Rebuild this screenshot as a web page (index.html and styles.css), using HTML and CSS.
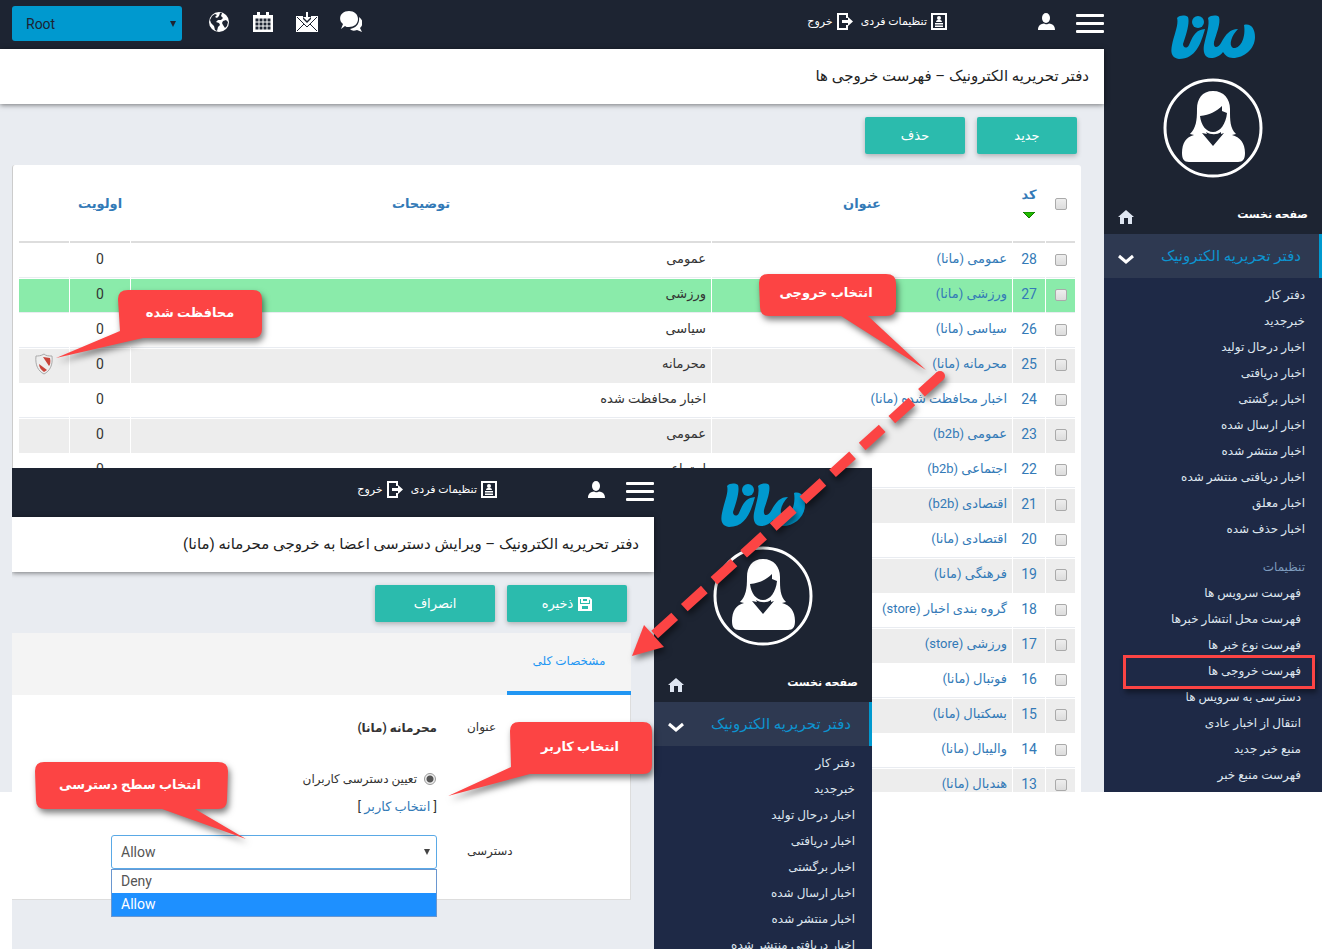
FILE: index.html
```html
<!DOCTYPE html>
<html lang="fa" dir="rtl">
<head>
    <meta charset="UTF-8">
    <meta name="viewport" content="width=device-width, initial-scale=1.0">
    <title>دفتر تحریریه الکترونیک - فهرست خروجی ها</title>
    <link rel="stylesheet" href="styles.css">
</head>
<body>

    <!-- Shared icons -->
    <svg class="sprite" aria-hidden="true">
        <symbol id="logo" viewBox="0 0 84 45">
            <path d="M6 3C9 0 14 0 17 2C19 8 15 20 12 29C12 33 16 34 18 30C23 18 26 15 34 14C30 28 25 44 8 44C-1 43 0 35 1 30C3 20 8 9 6 3z"/>
            <circle cx="27" cy="7" r="6"/>
            <path d="M37 3C40 0 46 0 48 2C50 8 45 20 43 27C42 34 47 33 50 28C55 19 59 14 67 14C61 20 57 30 62 33C70 34 75 22 73 10C80 8 84 14 84 22C84 34 73 43 62 43C57 43 54 40 52 37C49 41 44 43 40 43C33 43 32 36 33 30C35 20 39 10 37 3z"/>
        </symbol>
        <symbol id="avatar" viewBox="0 0 100 100">
            <circle cx="50" cy="50" r="48" fill="none" stroke="#fff" stroke-width="3"/>
            <path fill="#fff" d="M50 13C39 13 34 21 34 31C34 43 33 50 27 56L31 57C23 59 19 65 19 75C19 81 21 84 26 84L75 84C80 84 82 81 82 75C82 65 77 59 69 57L73 56C67 50 67 43 67 31C67 21 61 13 50 13z"/>
            <path fill="#1d2432" d="M37 38C47 37 54 33 59 28L59 33L64 35C63 46 57 54 50 54C43 54 38 47 37 38zM39 55L44 56L43 54C48 57 54 57 58 54L58 56L61 55L50 68z"/>
        </symbol>
        <symbol id="home" viewBox="0 0 16 14">
            <path d="M8 0L0 7L2 7L2 14L6 14L6 8L10 8L10 14L14 14L14 7L16 7z"/>
        </symbol>
        <symbol id="chevron" viewBox="0 0 16 10">
            <path d="M1 2L8 8L15 2" fill="none" stroke="#fff" stroke-width="3"/>
        </symbol>
        <symbol id="user" viewBox="0 0 17 17">
            <ellipse cx="8" cy="5" rx="4" ry="5"/>
            <path d="M0 17C0 12 3 11 6 10.500C7 11.500 10 11.500 11 10.500C14 11 17 12 17 17z"/>
        </symbol>
        <symbol id="profile" viewBox="0 0 16 17">
            <rect x="1" y="1" width="14" height="15" fill="none" stroke="#fff" stroke-width="2"/>
            <circle cx="8" cy="5" r="2"/>
            <path d="M5 9C5 6 11 6 11 9zM4 10H12V11.500H4zM4 12.500H12V14H4z"/>
        </symbol>
        <symbol id="logout" viewBox="0 0 16 17">
            <path d="M10 5V1H1V16H10V12" fill="none" stroke="#fff" stroke-width="2"/>
            <path d="M5 7H11V4L16 8.500L11 13V10H5z"/>
        </symbol>
    </svg>

    <!-- Output list window -->
    <div class="window list-window">
        <aside class="sidebar">
            <svg class="logo"><use href="#logo"/></svg>
            <svg class="avatar"><use href="#avatar"/></svg>
            <a class="home-link" href="#">صفحه نخست <svg><use href="#home"/></svg></a>
            <a class="section-link" href="#">دفتر تحریریه الکترونیک <svg><use href="#chevron"/></svg></a>
            <ul class="submenu">
                <li><a href="#">دفتر کار</a></li>
                <li><a href="#">خبرجدید</a></li>
                <li><a href="#">اخبار درحال تولید</a></li>
                <li><a href="#">اخبار دریافتی</a></li>
                <li><a href="#">اخبار برگشتی</a></li>
                <li><a href="#">اخبار ارسال شده</a></li>
                <li><a href="#">اخبار منتشر شده</a></li>
                <li><a href="#">اخبار دریافتی منتشر شده</a></li>
                <li><a href="#">اخبار معلق</a></li>
                <li><a href="#">اخبار حذف شده</a></li>
                <li class="submenu-title">تنظیمات</li>
                <li class="nested"><a href="#">فهرست سرویس ها</a></li>
                <li class="nested"><a href="#">فهرست محل انتشار خبرها</a></li>
                <li class="nested"><a href="#">فهرست نوع خبر ها</a></li>
                <li class="nested marked"><a href="#">فهرست خروجی ها</a></li>
                <li class="nested"><a href="#">دسترسی به سرویس ها</a></li>
                <li class="nested"><a href="#">انتقال از اخبار عادی</a></li>
                <li class="nested"><a href="#">منبع خبر جدید</a></li>
                <li class="nested"><a href="#">فهرست منبع خبر</a></li>
            </ul>
        </aside>

        <main class="main">
            <header class="topbar">
                <button class="menu-button" aria-label="منو"><span></span><span></span><span></span></button>
                <svg class="user-icon"><use href="#user"/></svg>
                <nav class="account">
                    <a href="#"><svg><use href="#profile"/></svg>تنظیمات فردی</a>
                    <a href="#"><svg><use href="#logout"/></svg>خروج</a>
                </nav>
                <div class="tools">
                    <select class="root-select" aria-label="Root"><option>Root</option></select>
                    <svg class="tool" viewBox="0 0 22 22">
                        <circle cx="11" cy="11" r="10"/>
                        <path fill="#1d2432" d="M4 5L7 3L9 4L7 6L9 7L11 5L12 2L14 2L13 5L15 7L13 9L10 9L8 11L11 12L12 14L10 16L9 20L7 19L6 15L3 12L2 9zM15 10L18 9L20 11L19 15L17 17L15 14L14 12z"/>
                    </svg>
                    <svg class="tool" viewBox="0 0 22 22">
                        <path d="M1 4H21V21H1zM5 1H8V5H5zM14 1H17V5H14z"/>
                        <path d="M3 7H19V19H3zM7 7V19M11 7V19M15 7V19M3 11H19M3 15H19" fill="#1d2432" stroke="#fff"/>
                    </svg>
                    <svg class="tool" viewBox="0 0 22 22">
                        <path d="M0 5H22V21H0z"/>
                        <path d="M1 6L11 16L21 6M1 20L8 13M21 20L14 13" fill="none" stroke="#1d2432"/>
                        <path d="M7 4H15V8L11 12L7 8z" fill="#1d2432"/>
                        <path d="M10 1H12V6H15L11 10L7 6H10z"/>
                    </svg>
                    <svg class="tool" viewBox="0 0 22 22">
                        <path d="M9 0C14 0 18 3 18 8S14 16 9 16C7 16 6 16 5 15L1 18L3 13C-3 8 1 0 9 0z"/>
                        <path d="M19 6C24 10 23 14 20 17L22 21L17 19C14 20 12 20 10 18C16 17 20 13 19 6z"/>
                    </svg>
                </div>
            </header>
            <h1 class="page-title">دفتر تحریریه الکترونیک – فهرست خروجی ها</h1>
            <div class="actions">
                <button class="btn">جدید</button>
                <button class="btn">حذف</button>
            </div>
            <div class="card table-card">
                <table class="outputs">
                    <colgroup>
                        <col class="col-check"><col class="col-code"><col class="col-title"><col><col class="col-priority"><col class="col-state">
                    </colgroup>
                    <thead>
                        <tr>
                            <th><input type="checkbox" aria-label="انتخاب همه"></th>
                            <th><a href="#">کد</a><svg class="sort" viewBox="0 0 14 7"><path d="M1 0H13L7 6z" fill="#2b0" stroke="#170"/></svg></th>
                            <th><a href="#">عنوان</a></th>
                            <th><a href="#">توضیحات</a></th>
                            <th><a href="#">اولویت</a></th>
                            <th></th>
                        </tr>
                    </thead>
                    <tbody>
                        <tr><td><input type="checkbox" aria-label="28"></td><td>28</td><td><a href="#">عمومی (مانا)</a></td><td>عمومی</td><td>0</td><td></td></tr>
                        <tr class="active"><td><input type="checkbox" aria-label="27"></td><td>27</td><td><a href="#">ورزشی (مانا)</a></td><td>ورزشی</td><td>0</td><td></td></tr>
                        <tr><td><input type="checkbox" aria-label="26"></td><td>26</td><td><a href="#">سیاسی (مانا)</a></td><td>سیاسی</td><td>0</td><td></td></tr>
                        <tr><td><input type="checkbox" aria-label="25"></td><td>25</td><td><a href="#">محرمانه (مانا)</a></td><td>محرمانه</td><td>0</td>
                            <td><svg class="shield" viewBox="0 0 18 22"><path d="M9 1C6 3 3 3 1 3C0 12 3 18 9 21C15 18 18 12 17 3C14 3 11 3 9 1z" fill="#eee" stroke="#aaa"/><path d="M8 4L15 5C16 9 15 12 14 13zM4 11L12 17L9 19C6 17 4 14 4 11z" fill="#c8443a"/></svg></td></tr>
                        <tr><td><input type="checkbox" aria-label="24"></td><td>24</td><td><a href="#">اخبار محافظت شده (مانا)</a></td><td>اخبار محافظت شده</td><td>0</td><td></td></tr>
                        <tr><td><input type="checkbox" aria-label="23"></td><td>23</td><td><a href="#">عمومی (b2b)</a></td><td>عمومی</td><td>0</td><td></td></tr>
                        <tr><td><input type="checkbox" aria-label="22"></td><td>22</td><td><a href="#">اجتماعی (b2b)</a></td><td>اجتماعی</td><td>0</td><td></td></tr>
                        <tr><td><input type="checkbox" aria-label="21"></td><td>21</td><td><a href="#">اقتصادی (b2b)</a></td><td></td><td></td><td></td></tr>
                        <tr><td><input type="checkbox" aria-label="20"></td><td>20</td><td><a href="#">اقتصادی (مانا)</a></td><td></td><td></td><td></td></tr>
                        <tr><td><input type="checkbox" aria-label="19"></td><td>19</td><td><a href="#">فرهنگی (مانا)</a></td><td></td><td></td><td></td></tr>
                        <tr><td><input type="checkbox" aria-label="18"></td><td>18</td><td><a href="#">گروه بندی اخبار (store)</a></td><td></td><td></td><td></td></tr>
                        <tr><td><input type="checkbox" aria-label="17"></td><td>17</td><td><a href="#">ورزشی (store)</a></td><td></td><td></td><td></td></tr>
                        <tr><td><input type="checkbox" aria-label="16"></td><td>16</td><td><a href="#">فوتبال (مانا)</a></td><td></td><td></td><td></td></tr>
                        <tr><td><input type="checkbox" aria-label="15"></td><td>15</td><td><a href="#">بسکتبال (مانا)</a></td><td></td><td></td><td></td></tr>
                        <tr><td><input type="checkbox" aria-label="14"></td><td>14</td><td><a href="#">والیبال (مانا)</a></td><td></td><td></td><td></td></tr>
                        <tr><td><input type="checkbox" aria-label="13"></td><td>13</td><td><a href="#">هندبال (مانا)</a></td><td></td><td></td><td></td></tr>
                    </tbody>
                </table>
            </div>
        </main>
    </div>

    <!-- Access edit window -->
    <div class="window edit-window">
        <aside class="sidebar">
            <svg class="logo"><use href="#logo"/></svg>
            <svg class="avatar"><use href="#avatar"/></svg>
            <a class="home-link" href="#">صفحه نخست <svg><use href="#home"/></svg></a>
            <a class="section-link" href="#">دفتر تحریریه الکترونیک <svg><use href="#chevron"/></svg></a>
            <ul class="submenu">
                <li><a href="#">دفتر کار</a></li>
                <li><a href="#">خبرجدید</a></li>
                <li><a href="#">اخبار درحال تولید</a></li>
                <li><a href="#">اخبار دریافتی</a></li>
                <li><a href="#">اخبار برگشتی</a></li>
                <li><a href="#">اخبار ارسال شده</a></li>
                <li><a href="#">اخبار منتشر شده</a></li>
                <li><a href="#">اخبار دریافتی منتشر شده</a></li>
            </ul>
        </aside>

        <div class="main">
            <header class="topbar">
                <button class="menu-button" aria-label="منو"><span></span><span></span><span></span></button>
                <svg class="user-icon"><use href="#user"/></svg>
                <nav class="account">
                    <a href="#"><svg><use href="#profile"/></svg>تنظیمات فردی</a>
                    <a href="#"><svg><use href="#logout"/></svg>خروج</a>
                </nav>
            </header>
            <h1 class="page-title">دفتر تحریریه الکترونیک – ویرایش دسترسی اعضا به خروجی محرمانه (مانا)</h1>
            <div class="actions wide">
                <button class="btn"><svg viewBox="0 0 14 14"><path d="M1 1H11L13 3V13H1zM4 1V5H10V1M3 13V8H11V13" fill="none" stroke="#fff" stroke-width="2"/></svg>ذخیره</button>
                <button class="btn">انصراف</button>
            </div>
            <form class="card form-card">
                <div class="tabs"><a class="tab" href="#">مشخصات کلی</a></div>
                <div class="fields">
                    <span class="label">عنوان</span>
                    <strong class="value">محرمانه (مانا)</strong>
                    <div class="users">
                        <label><input type="radio" name="access-mode" checked>تعیین دسترسی کاربران</label>
                        <div class="pick-user">[ <a href="#">انتخاب کاربر</a> ]</div>
                    </div>
                    <label class="label" for="access">دسترسی</label>
                    <div class="access">
                        <select id="access"><option>Deny</option><option selected>Allow</option></select>
                        <ul class="options">
                            <li>Deny</li>
                            <li class="selected">Allow</li>
                        </ul>
                    </div>
                </div>
            </form>
        </div>
    </div>

    <!-- Callouts and arrow over both windows -->
    <svg class="notes" direction="rtl">
        <g class="note-shapes">
            <path d="M128 290H253Q262 290 262 299V329Q262 338 253 338H143L56 358L120 331L118 299Q118 290 128 290z"/>
            <path d="M768 274H886Q896 274 896 283V307Q896 316 886 316H868L926 370L841 316H769Q760 316 760 307L759 283Q759 274 768 274z"/>
            <path d="M519 722H643Q652 722 652 731V765Q652 774 643 774H530L448 796L511 767L510 731Q510 722 519 722z"/>
            <path d="M44 762H218Q228 762 228 771L227 800Q227 809 218 809H195L246 839L162 809H45Q36 809 36 800L35 771Q35 762 44 762z"/>
            <circle cx="940" cy="376" r="5"/>
            <path d="M940 376L653 636" class="dashes"/>
            <path d="M632 656L644 625L664 647z"/>
        </g>
        <g class="note-texts">
            <text x="190" y="317">محافظت شده</text>
            <text x="826" y="297">انتخاب خروجی</text>
            <text x="580" y="751">انتخاب کاربر</text>
            <text x="130" y="789">انتخاب سطح دسترسی</text>
        </g>
    </svg>

</body>
</html>
```
FILE: styles.css
```css
/* General Styling */
* {
    box-sizing: border-box;
}

body {
    margin: 0;
    height: 100vh;
    position: relative;
    overflow: hidden;
    background: #fff;
    color: #333;
    font-family: Roboto, "DejaVu Sans", sans-serif;
    font-size: 12px;
}

a {
    color: #337ab7;
    text-decoration: none;
}

ul {
    list-style: none;
    margin: 0;
    padding: 0;
}

button, select {
    font-family: inherit;
    border: 0;
}

svg {
    fill: #fff;
    flex: none;
}

.sprite {
    position: absolute;
    width: 0;
    height: 0;
}

/* Windows */
.window {
    display: flex;
    overflow: hidden;
    background: #e9ecf1;
}

.list-window {
    height: calc(100vh - 157px);
}

.edit-window {
    position: absolute;
    left: 12px;
    top: 468px;
    bottom: 0;
    width: 860px;
}

.main {
    flex: 1;
    min-width: 0;
}

/* Sidebar */
.sidebar {
    width: 218px;
    flex: none;
    display: flex;
    flex-direction: column;
    background: #1d2432;
}

.logo {
    width: 84px;
    height: 45px;
    margin: 15px auto 18px;
    fill: #0099cf;
}

.avatar {
    width: 100px;
    height: 100px;
    margin: 0 auto 16px;
}

.home-link, .section-link {
    display: flex;
    flex: none;
    align-items: center;
    justify-content: space-between;
    padding: 0 14px;
}

.home-link {
    height: 40px;
    color: #fff;
    font-size: 11px;
    font-weight: bold;
}

.home-link svg {
    width: 16px;
    height: 14px;
    margin-top: 6px;
    fill: #dfe6f2;
}

.section-link {
    height: 44px;
    background: #2e3951;
    border-right: 3px solid #0099cf;
    padding-right: 18px;
    color: #0d93cf;
    font-size: 15px;
}

.section-link svg {
    width: 16px;
    height: 10px;
    margin-top: 6px;
}

.submenu {
    flex: 1;
    padding: 4px 17px;
    background: #1e2946;
    line-height: 26px;
    white-space: nowrap;
}

.submenu a {
    color: #dde5ee;
}

.submenu-title {
    margin-top: 13px;
    color: #7d9bbd;
    line-height: 25px;
}

.nested {
    padding-right: 4px;
}

.marked {
    position: relative;
}

.marked::after {
    content: "";
    position: absolute;
    inset: -3px -10px -5px 2px;
    border: 3px solid #fc4444;
    box-shadow: 2px 4px 5px rgba(0, 0, 0, 0.4);
}

/* Top bar */
.topbar {
    display: flex;
    align-items: center;
    height: 49px;
    padding: 0 0 2px 12px;
    background: #1d2432;
}

.menu-button {
    display: flex;
    flex-direction: column;
    gap: 5px;
    width: 28px;
    padding: 0;
    background: none;
}

.menu-button span {
    height: 3px;
    background: #fff;
    border-radius: 1px;
}

.user-icon {
    width: 17px;
    height: 17px;
    margin: 0 21px 4px 91px;
}

.account {
    display: flex;
    gap: 8px;
    margin-bottom: 4px;
}

.account a {
    display: flex;
    align-items: center;
    gap: 4px;
    color: #fff;
    font-size: 11px;
}

.account svg {
    width: 16px;
    height: 17px;
}

.tools {
    display: flex;
    direction: ltr;
    align-items: center;
    gap: 22px;
    margin-right: auto;
}

.tool {
    width: 22px;
    height: 22px;
    margin-bottom: 4px;
}

.root-select {
    width: 170px;
    height: 35px;
    margin-right: 4px;
    padding: 0 14px;
    border-radius: 3px;
    appearance: none;
    background: #0099cf url("data:image/svg+xml,%3Csvg xmlns='http://www.w3.org/2000/svg' width='6' height='6'%3E%3Cpath d='M0 0H6L3 6z' fill='%231d2432'/%3E%3C/svg%3E") no-repeat right 6px center;
    color: #1d2432;
    font-size: 14px;
}

/* Page title and buttons */
.page-title {
    position: relative;
    margin: 0;
    height: 55px;
    padding: 0 15px;
    background: #fff;
    box-shadow: 0 1px 5px rgba(0, 0, 0, 0.5);
    font-size: 15px;
    font-weight: normal;
    line-height: 54px;
    color: #222;
    white-space: nowrap;
}

.actions {
    display: flex;
    gap: 12px;
    padding: 13px 27px 11px;
}

.btn {
    display: flex;
    align-items: center;
    justify-content: center;
    gap: 5px;
    width: 100px;
    height: 37px;
    background: #2bbbad;
    border-radius: 2px;
    box-shadow: 0 2px 5px rgba(0, 0, 0, 0.25);
    color: #fff;
    font-size: 13px;
}

.btn svg {
    width: 14px;
    height: 14px;
}

.wide .btn {
    width: 120px;
}

.card {
    background: #fff;
}

/* Outputs table */
.table-card {
    margin: 0 23px 0 12px;
    padding: 0 5px;
    border-left: 1px solid #ccc;
    border-radius: 3px;
}

.outputs {
    width: 100%;
    table-layout: fixed;
    border-collapse: separate;
    border-spacing: 1px 0;
}

.col-check { width: 29px; }
.col-code { width: 32px; }
.col-title { width: 300px; }
.col-priority { width: 60px; }
.col-state { width: 50px; }

.outputs th {
    height: 78px;
    padding: 0;
    border-bottom: 2px solid #ddd;
    font-size: 13px;
}

.outputs td {
    height: 35px;
    padding: 0 5px 3px;
    border-top: 1px solid #fff;
    border-bottom: 1px solid #e9ecf1;
    font-size: 13px;
    line-height: 20px;
    text-align: center;
    white-space: nowrap;
}

.outputs td:first-child {
    padding-bottom: 2px;
}

.outputs td:nth-child(2), .outputs td:nth-child(5) {
    padding: 0 0 4px;
    font-size: 14px;
}

.outputs td:nth-child(2) {
    color: #337ab7;
}

.outputs td:nth-child(3), .outputs td:nth-child(4) {
    text-align: right;
}

.outputs tbody tr:nth-child(even) td {
    background: #ededed;
    border-bottom-color: #ededed;
}

.outputs tbody tr.active td {
    background: #8aebaa;
    border-bottom-color: #e9ecf1;
}

.sort {
    display: block;
    width: 14px;
    height: 7px;
    margin: 10px auto 0;
}

.shield {
    display: block;
    width: 18px;
    height: 22px;
    margin: auto;
}

input[type="checkbox"] {
    appearance: none;
    width: 12px;
    height: 12px;
    margin: 0;
    border: 1px solid #aaa;
    border-radius: 2px;
    background: linear-gradient(#eee, #dcdcdc);
    vertical-align: middle;
}

/* Edit form */
.form-card {
    margin-right: 23px;
    border: solid #ddd;
    border-width: 0 1px 1px 0;
}

.tabs {
    display: flex;
    height: 62px;
    margin-right: -1px;
    background: #f4f4f4;
}

.tab {
    width: 124px;
    border-bottom: 4px solid #2196f3;
    color: #2196f3;
    line-height: 56px;
    text-align: center;
}

.fields {
    display: grid;
    grid-template-columns: 148px 326px;
    column-gap: 30px;
    padding: 20px 15px 30px 0;
}

.label {
    line-height: 24px;
    text-align: left;
}

.value {
    line-height: 26px;
}

.users {
    grid-column: 2;
    margin: 24px 0 14px;
    line-height: 28px;
}

.users label {
    display: flex;
    align-items: center;
    gap: 6px;
}

.users input {
    appearance: none;
    width: 12px;
    height: 12px;
    margin: 0 1px;
    border: 1px solid #999;
    border-radius: 50%;
    background: radial-gradient(#555 0 3px, #eee 4px);
}

.pick-user {
    font-size: 13px;
}

label.label {
    line-height: 32px;
}

.access {
    position: relative;
    direction: ltr;
    font-size: 14px;
}

.access select {
    display: block;
    width: 100%;
    height: 34px;
    padding: 0 9px;
    border: 1px solid #5aa9e6;
    border-radius: 3px;
    appearance: none;
    background: #fff url("data:image/svg+xml,%3Csvg xmlns='http://www.w3.org/2000/svg' width='6' height='6'%3E%3Cpath d='M0 0H6L3 6z' fill='%23444'/%3E%3C/svg%3E") no-repeat right 6px center;
    color: #555;
    font-size: 14px;
}

.options {
    position: absolute;
    top: 34px;
    left: 0;
    right: 0;
    border: 1px solid #6a97d0;
    background: #fff;
    color: #555;
    line-height: 23px;
}

.options li {
    padding: 0 9px;
}

.options .selected {
    background: #1e90ff;
    color: #fff;
}

/* Callouts */
.notes {
    position: absolute;
    top: 0;
    left: 0;
    width: 100%;
    height: 100%;
    pointer-events: none;
}

.note-shapes {
    fill: #fc4444;
    filter: drop-shadow(2px 4px 3px rgba(0, 0, 0, 0.5));
}

.dashes {
    stroke: #fc4444;
    stroke-width: 10;
    stroke-dasharray: 27 13;
    stroke-dashoffset: 2;
}

.note-texts {
    fill: #fff;
    font-size: 13px;
    font-weight: bold;
    text-anchor: middle;
}
```
